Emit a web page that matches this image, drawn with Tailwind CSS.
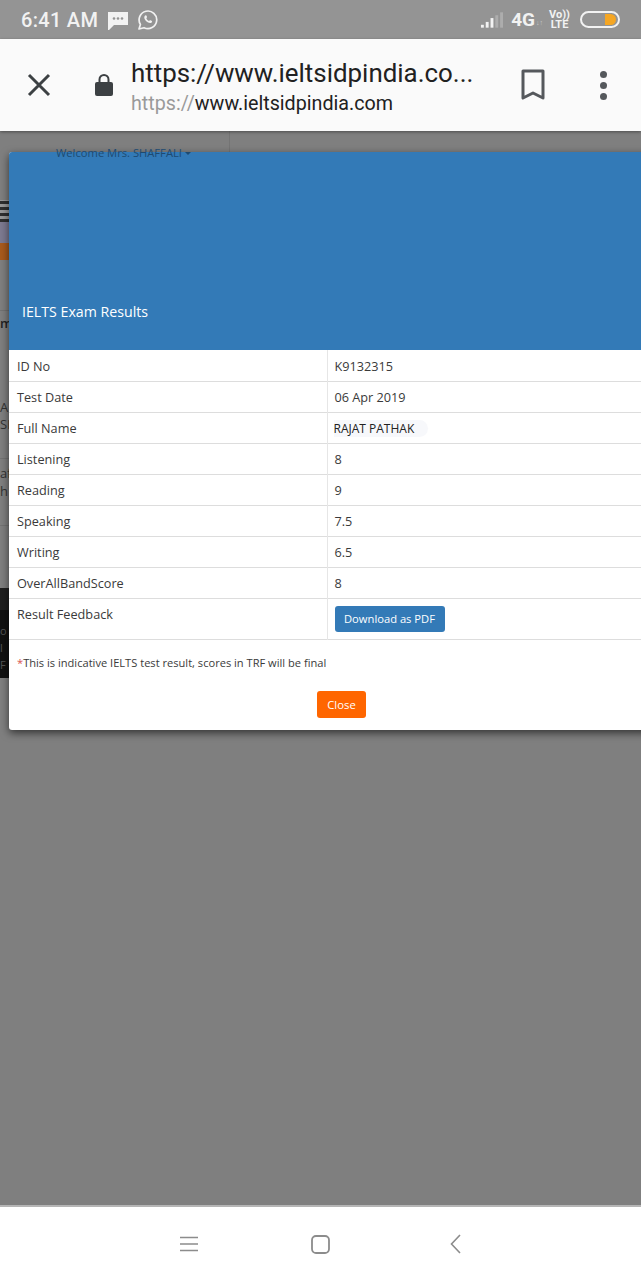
<!doctype html>
<html lang="en">
<head>
  <meta charset="UTF-8">
  <title>IELTS Exam Results</title>
  <meta name="viewport" content="width=device-width, initial-scale=1.0">
  <script src="https://cdn.jsdelivr.net/npm/@tailwindcss/browser@4"></script>
</head>
<body class="w-[641px] h-[1280px] overflow-hidden bg-[#7f7f7f] font-['Roboto',sans-serif]">

  <!-- status bar -->
  <div class="h-[39px] bg-[#949494] flex items-center justify-between pl-[21px] pr-[21px] text-[#f2f2f2]">
    <div class="flex items-center">
      <span class="text-[20px] font-medium tracking-[0.3px]">6:41 AM</span>
      <svg class="ml-[10px]" width="20" height="20" viewBox="0 0 20 20"><path d="M0 2h20v13H6l-5 5H0z" fill="#f2f2f2"/><circle cx="6" cy="8.500" r="1.300" fill="#949494"/><circle cx="10" cy="8.500" r="1.300" fill="#949494"/><circle cx="14" cy="8.500" r="1.300" fill="#949494"/></svg>
      <svg class="ml-[10px]" width="20" height="20" viewBox="0 0 20 20" fill="none"><path d="M1 19l1.400-4.600A8.800 8.800 0 1 1 6 17.700z" stroke="#f2f2f2" stroke-width="1.700" stroke-linejoin="round"/><path d="M6.700 6c1-1.300 1.800-.7 2.300.8.200.7-.7 1.200-.6 1.700.5 1.100 1.400 2 2.500 2.500.6 0 1-.9 1.700-.7 1.500.6 2.100 1.400.8 2.400-2.800 1.800-8.800-3.700-6.700-6.700z" fill="#f2f2f2"/></svg>
    </div>
    <div class="flex items-center">
      <svg width="23" height="18" viewBox="0 0 24 18"><rect x="1" y="14" width="3" height="3" fill="#f2f2f2"/><rect x="6" y="11" width="3" height="6" fill="#f2f2f2"/><rect x="11" y="7" width="3" height="10" fill="#f2f2f2"/><rect x="16" y="4" width="3" height="13" fill="#adadad"/><rect x="21" y="1" width="3" height="16" fill="#adadad"/></svg>
      <span class="ml-[8px] text-[19px] font-bold leading-none">4G</span>
      <span class="ml-[1px] mt-[8px] text-[7px] leading-none text-[#c8c8c8]">↓↑</span>
      <span class="ml-[6px] w-[21px] text-[11px] font-bold leading-[10px] text-center whitespace-nowrap">Vo))<br>LTE</span>
      <div class="ml-[10px] w-[40px] h-[17px] rounded-full border-2 border-[#f2f2f2] flex justify-end items-center pr-[2px]">
        <div class="w-[11px] h-[11px] rounded-r-full rounded-l-[2px] bg-[#f5a623]"></div>
      </div>
    </div>
  </div>

  <!-- custom tab toolbar -->
  <div class="h-[92px] bg-[#fafafa] flex items-center shadow-[0_1px_3px_rgba(0,0,0,0.4)] relative z-10">
    <svg class="ml-[27px]" width="24" height="24" viewBox="0 0 24 24"><path d="M2 2l20 20M22 2L2 22" stroke="#3c4043" stroke-width="3"/></svg>
    <svg class="ml-[43px]" width="20" height="24" viewBox="0 0 20 24"><path d="M5.500 10V6.500a4.500 4.500 0 0 1 9 0V10" fill="none" stroke="#3c4043" stroke-width="2"/><rect x="1" y="9" width="18" height="14" rx="2" fill="#3c4043"/></svg>
    <div class="ml-[17px] w-[350px] whitespace-nowrap mt-[4px]">
      <div class="text-[25.900px] leading-[32px] text-[#212121]">https://www.ieltsidpindia.co...</div>
      <div class="text-[19.700px] leading-[26px] text-[#212121] mt-[2px]"><span class="text-[#9a9a9a]">https://</span>www.ieltsidpindia.com</div>
    </div>
    <svg class="ml-[39px]" width="26" height="32" viewBox="0 0 26 32"><path d="M3 2h20v27l-10-5-10 5z" fill="none" stroke="#55585c" stroke-width="3" stroke-linejoin="round"/></svg>
    <div class="ml-[54px] flex flex-col gap-[4px]">
      <div class="w-[7px] h-[7px] rounded-full bg-[#55585c]"></div>
      <div class="w-[7px] h-[7px] rounded-full bg-[#55585c]"></div>
      <div class="w-[7px] h-[7px] rounded-full bg-[#55585c]"></div>
    </div>
  </div>

  <!-- page area behind the dialog -->
  <div class="relative h-[1074px] font-['Open_Sans',sans-serif]">
    <div class="absolute left-[229px] top-0 h-[21px] w-px bg-[#747474]"></div>

    <!-- slivers of the page that show left of the dialog -->
    <div class="absolute left-0 top-[69px] w-[9px] h-[22px] bg-[repeating-linear-gradient(0deg,#2f2f2f_0_3px,#9a9a9a_3px_6px)]"></div>
    <div class="absolute left-0 top-[91px] w-[9px] h-[21px] bg-[#7d7a90]"></div>
    <div class="absolute left-0 top-[112px] w-[9px] h-[17px] bg-[#a85a1c]"></div>
    <div class="absolute left-0 top-[179px] w-[9px] h-px bg-[#727272]"></div>
    <div class="absolute left-0 top-[184px] w-[9px] text-[13px] leading-[16px] text-[#222] font-semibold overflow-hidden">m</div>
    <div class="absolute left-0 top-[268px] w-[9px] text-[13px] leading-[17px] text-[#333] overflow-hidden">A<br>SH</div>
    <div class="absolute left-0 top-[327px] w-[9px] h-px bg-[#727272]"></div>
    <div class="absolute left-0 top-[333px] w-[9px] text-[13px] leading-[18px] text-[#333] overflow-hidden">af<br>h</div>
    <div class="absolute left-0 top-[394px] w-[9px] h-px bg-[#727272]"></div>
    <div class="absolute left-0 top-[457px] w-[9px] h-[22px] bg-[#1f1f1f]"></div>
    <div class="absolute left-0 top-[479px] w-[9px] h-[68px] bg-[#111] text-[11px] leading-[17px] text-[#555] overflow-hidden pt-[12px]">o<br>l<br>F</div>

    <!-- modal -->
    <div class="absolute left-[9px] top-[21px] w-[700px] h-[578px] bg-white rounded-[3px] shadow-[0_3px_8px_rgba(0,0,0,0.6)] text-[12.700px] text-[#3a3a3a]">
      <div class="h-[198px] bg-[#337ab7] rounded-t-[3px] flex items-end pl-[13px] pb-[28px] text-[14.200px] text-white">IELTS Exam Results</div>
      <table class="w-full border-collapse">
        <tbody>
          <tr class="h-[31px] border-b border-[#ddd]"><td class="w-[318px] pl-[8px] pt-[2px] border-r border-[#e6e6e6]">ID No</td><td class="pl-[7px] pt-[2px]">K9132315</td></tr>
          <tr class="h-[31px] border-b border-[#ddd]"><td class="pl-[8px] pt-[2px] border-r border-[#e6e6e6]">Test Date</td><td class="pl-[7px] pt-[2px]">06 Apr 2019</td></tr>
          <tr class="h-[31px] border-b border-[#ddd]"><td class="pl-[8px] pt-[2px] border-r border-[#e6e6e6]">Full Name</td><td class="pl-[6px] pt-[2px] text-[12px] text-[#222]"><span class="pr-[14px] rounded-r-full bg-[#f7f8fb]">RAJAT PATHAK</span></td></tr>
          <tr class="h-[31px] border-b border-[#ddd]"><td class="pl-[8px] pt-[2px] border-r border-[#e6e6e6]">Listening</td><td class="pl-[7px] pt-[2px]">8</td></tr>
          <tr class="h-[31px] border-b border-[#ddd]"><td class="pl-[8px] pt-[2px] border-r border-[#e6e6e6]">Reading</td><td class="pl-[7px] pt-[2px]">9</td></tr>
          <tr class="h-[31px] border-b border-[#ddd]"><td class="pl-[8px] pt-[2px] border-r border-[#e6e6e6]">Speaking</td><td class="pl-[7px] pt-[2px]">7.5</td></tr>
          <tr class="h-[31px] border-b border-[#ddd]"><td class="pl-[8px] pt-[2px] border-r border-[#e6e6e6]">Writing</td><td class="pl-[7px] pt-[2px]">6.5</td></tr>
          <tr class="h-[31px] border-b border-[#ddd]"><td class="pl-[8px] pt-[2px] border-r border-[#e6e6e6]">OverAllBandScore</td><td class="pl-[7px] pt-[2px]">8</td></tr>
          <tr class="h-[41px] border-b border-[#ddd]"><td class="pl-[8px] pb-[8px] border-r border-[#e6e6e6]">Result Feedback</td><td class="pl-[7px]"><span class="inline-block w-[110px] h-[26px] leading-[26px] text-center rounded-[3px] bg-[#337ab7] text-white text-[11.200px]">Download as PDF</span></td></tr>
        </tbody>
      </table>
      <p class="mt-[14px] pl-[8px] text-[11.100px] leading-[18px] text-[#3a3a3a]"><span class="text-[#d9534f]">*</span>This is indicative IELTS test result, scores in TRF will be final</p>
      <div class="mt-[19px] ml-[308px] w-[49px] h-[27px] leading-[27px] text-center rounded-[3px] bg-[#ff6600] text-white text-[11.300px]">Close</div>
    </div>
    <div class="absolute left-[56px] top-[15px] flex items-center text-[11.200px] leading-[14px] text-[#1d4a72]">Welcome Mrs. SHAFFALI<span class="ml-[3px] w-0 h-0 border-x-[3.500px] border-x-transparent border-t-[3.500px] border-t-[#1d4a72]"></span></div>
  </div>

  <!-- android nav bar -->
  <div class="h-[75px] bg-white border-t-2 border-[#b5b5b5] flex items-center pl-[180px] pt-[1px]">
    <svg width="18" height="16" viewBox="0 0 18 16"><path d="M0 1.500h18M0 8h18M0 14.500h18" stroke="#8c8c8c" stroke-width="1.600"/></svg>
    <svg class="ml-[113px]" width="19" height="19" viewBox="0 0 19 19"><rect x="1" y="1" width="17" height="17" rx="4" fill="none" stroke="#8c8c8c" stroke-width="1.800"/></svg>
    <svg class="ml-[120px]" width="11" height="20" viewBox="0 0 11 20"><path d="M10 1L1.500 10l8.500 9" fill="none" stroke="#8c8c8c" stroke-width="1.600"/></svg>
  </div>
</body>
</html>
